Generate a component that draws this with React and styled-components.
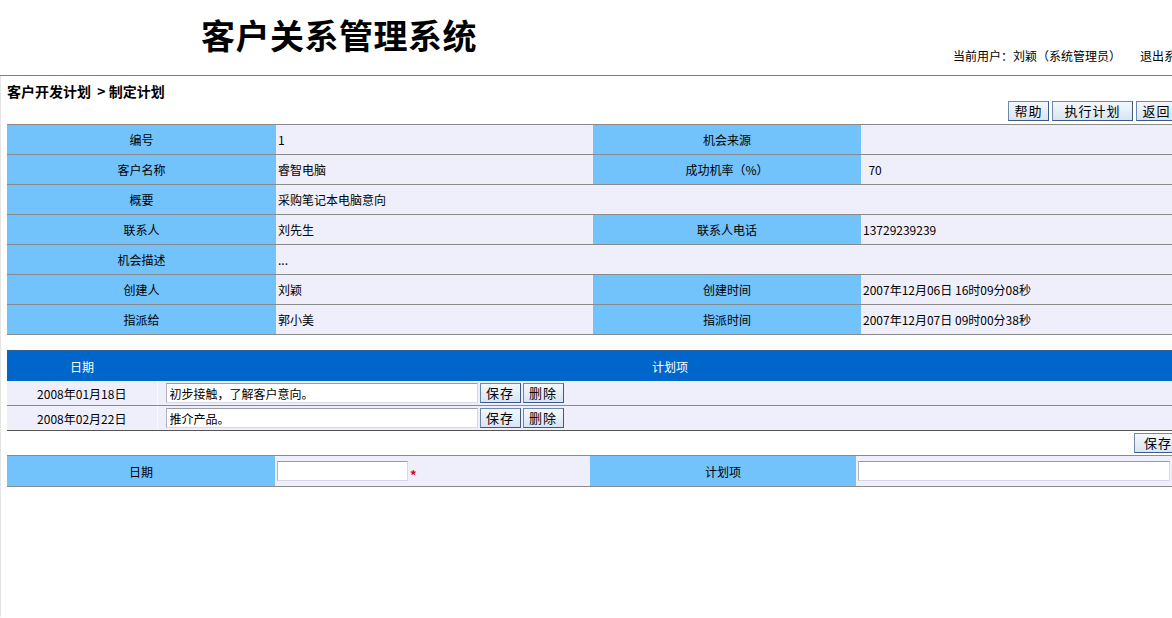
import styled, { createGlobalStyle } from "styled-components";

const GlobalStyle = createGlobalStyle`
    html, body {
        margin: 0;
        padding: 0;
        background: #ffffff;
        overflow: hidden;
    }
    body {
        font-family: "Noto Sans CJK SC", "DejaVu Sans", sans-serif;
        font-size: 12px;
        color: #000000;
    }
`;

const Page = styled.div`
    width: 1190px;
    min-height: 618px;
`;

const Header = styled.header`
    height: 76px;
    border-bottom: 1px solid #7f7f7f;
    display: flex;
    align-items: flex-start;
    justify-content: space-between;
    box-sizing: border-box;
`;

const SystemTitle = styled.h1`
    margin: 15px 0 0 201px;
    font-size: 34px;
    line-height: 40px;
    font-weight: bold;
    letter-spacing: 0.5px;
`;

const UserInfo = styled.div`
    margin: 48px 2px 0 0;
    display: flex;
    gap: 19px;
    font-size: 12px;
    line-height: 16px;
    white-space: nowrap;
`;

const Body = styled.main`
    border-left: 1px solid #e4e4e4;
    min-height: 541px;
`;

const Crumb = styled.div`
    padding: 6px 0 0 6px;
    font-size: 14px;
    line-height: 18px;
    font-weight: bold;
`;

const ButtonBar = styled.div`
    display: flex;
    justify-content: flex-end;
    gap: 3px;
    padding-right: ${p => p.$right || 13}px;
    margin: ${p => p.$margin || "1px 0 3px"};
`;

const Button = styled.button`
    width: ${p => p.$w || 41}px;
    height: 20px;
    padding: 0;
    border: 1px solid #3b5a86;
    border-top-color: #6d87ad;
    border-left-color: #6d87ad;
    background: linear-gradient(#f4f8fd, #d8e5f4);
    font-family: "Noto Sans CJK SC", sans-serif;
    font-size: 13px;
    line-height: 18px;
    letter-spacing: 1px;
    color: #000;
    cursor: pointer;
`;

const Table = styled.table`
    width: 1176px;
    margin-left: 6px;
    border-collapse: collapse;
    table-layout: fixed;
    border-top: 1px solid ${p => p.$top || "#8a8a8a"};
`;

const Label = styled.td`
    height: ${p => p.$h || 29}px;
    padding: 0;
    background: #72c2fb;
    text-align: center;
    border-bottom: 1px solid #8a8a8a;
    font-size: 12px;
`;

const Value = styled.td`
    height: ${p => p.$h || 29}px;
    padding: 0 0 0 2px;
    background: #efeefb;
    border-bottom: 1px solid #8a8a8a;
    font-size: 12px;
    white-space: nowrap;
`;

const HeadCell = styled.th`
    height: 30px;
    padding: 0;
    background: #0066cc;
    color: #ffffff;
    font-weight: normal;
    font-size: 12px;
    text-align: center;
`;

const DateCell = styled.td`
    height: 24px;
    padding: 0;
    background: #efeefb;
    text-align: center;
    border-bottom: 1px solid ${p => (p.$last ? "#555" : "#8a8a8a")};
    font-size: 12px;
`;

const ItemCell = styled.td`
    height: 24px;
    padding: 0 0 0 8px;
    background: #efeefb;
    border-left: 1px solid #f8f8ff;
    border-bottom: 1px solid ${p => (p.$last ? "#555" : "#8a8a8a")};
`;

const ItemRow = styled.div`
    display: flex;
    align-items: center;
    gap: 2px;
`;

const TextInput = styled.input`
    box-sizing: border-box;
    width: ${p => p.$w}px;
    height: 20px;
    margin: 0;
    padding: 0 3px;
    border: 1px solid #d8d8e4;
    border-top-color: #9a9aa8;
    border-left-color: #b4b4c0;
    background: #ffffff;
    font-family: "Noto Sans CJK SC", sans-serif;
    font-size: 12px;
    color: #000;
    outline: none;
`;

const FieldWrap = styled.div`
    display: flex;
    align-items: center;
`;

const Required = styled.span`
    color: #e00000;
    font-size: 13px;
    font-weight: bold;
    margin: 7px 0 0 2px;
`;

const Spacer = styled.div`
    height: ${p => p.$h}px;
`;

const info = [
	[["编号", "1"], ["机会来源", ""]],
	[["客户名称", "睿智电脑"], ["成功机率（%）", "\u00a0\u00a070"]],
	[["概要", "采购笔记本电脑意向"]],
	[["联系人", "刘先生"], ["联系人电话", "13729239239"]],
	[["机会描述", "..."]],
	[["创建人", "刘颖"], ["创建时间", "2007年12月06日 16时09分08秒"]],
	[["指派给", "郭小美"], ["指派时间", "2007年12月07日 09时00分38秒"]]
];

const plans = [
	{ date: "2008年01月18日", item: "初步接触，了解客户意向。" },
	{ date: "2008年02月22日", item: "推介产品。" }
];

const App = () => {
	return (
		<Page>
			<GlobalStyle />
			<Header>
				<SystemTitle>客户关系管理系统</SystemTitle>
				<UserInfo>
					<span>当前用户：刘颖（系统管理员）</span>
					<span>退出系统</span>
				</UserInfo>
			</Header>
			<Body>
				<Crumb>客户开发计划&nbsp;&nbsp;&gt; 制定计划</Crumb>
				<ButtonBar>
					<Button>帮助</Button>
					<Button $w={81}>执行计划</Button>
					<Button>返回</Button>
				</ButtonBar>
				<Table>
					<colgroup>
						<col style={{ width: 269 }} />
						<col style={{ width: 317 }} />
						<col style={{ width: 268 }} />
						<col />
					</colgroup>
					<tbody>
						{info.map((row, i) => (
							<tr key={i}>
								{row.length === 1 ? (
									<>
										<Label>{row[0][0]}</Label>
										<Value colSpan={3}>{row[0][1]}</Value>
									</>
								) : (
									row.map(([k, v]) => [
										<Label key={k}>{k}</Label>,
										<Value key={k + "v"}>{v}</Value>
									])
								)}
							</tr>
						))}
					</tbody>
				</Table>
				<Spacer $h={15} />
				<Table $top="#2d5f96">
					<colgroup>
						<col style={{ width: 150 }} />
						<col />
					</colgroup>
					<thead>
						<tr>
							<HeadCell>日期</HeadCell>
							<HeadCell>计划项</HeadCell>
						</tr>
					</thead>
					<tbody>
						{plans.map((p, i) => (
							<tr key={p.date}>
								<DateCell $last={i === plans.length - 1}>{p.date}</DateCell>
								<ItemCell $last={i === plans.length - 1}>
									<ItemRow>
										<TextInput $w={312} defaultValue={p.item} />
										<Button>保存</Button>
										<Button>删除</Button>
									</ItemRow>
								</ItemCell>
							</tr>
						))}
					</tbody>
				</Table>
				<ButtonBar $right={8} $margin="2px 0 2px">
					<Button $w={48}>保存</Button>
				</ButtonBar>
				<Table $top="#8a8a8a">
					<colgroup>
						<col style={{ width: 268 }} />
						<col style={{ width: 315 }} />
						<col style={{ width: 266 }} />
						<col />
					</colgroup>
					<tbody>
						<tr>
							<Label $h={30}>日期</Label>
							<Value $h={30}>
								<FieldWrap>
									<TextInput $w={131} />
									<Required>*</Required>
								</FieldWrap>
							</Value>
							<Label $h={30}>计划项</Label>
							<Value $h={30}>
								<FieldWrap>
									<TextInput $w={312} />
									<Required>*</Required>
								</FieldWrap>
							</Value>
						</tr>
					</tbody>
				</Table>
			</Body>
		</Page>
	);
};

export default App;
